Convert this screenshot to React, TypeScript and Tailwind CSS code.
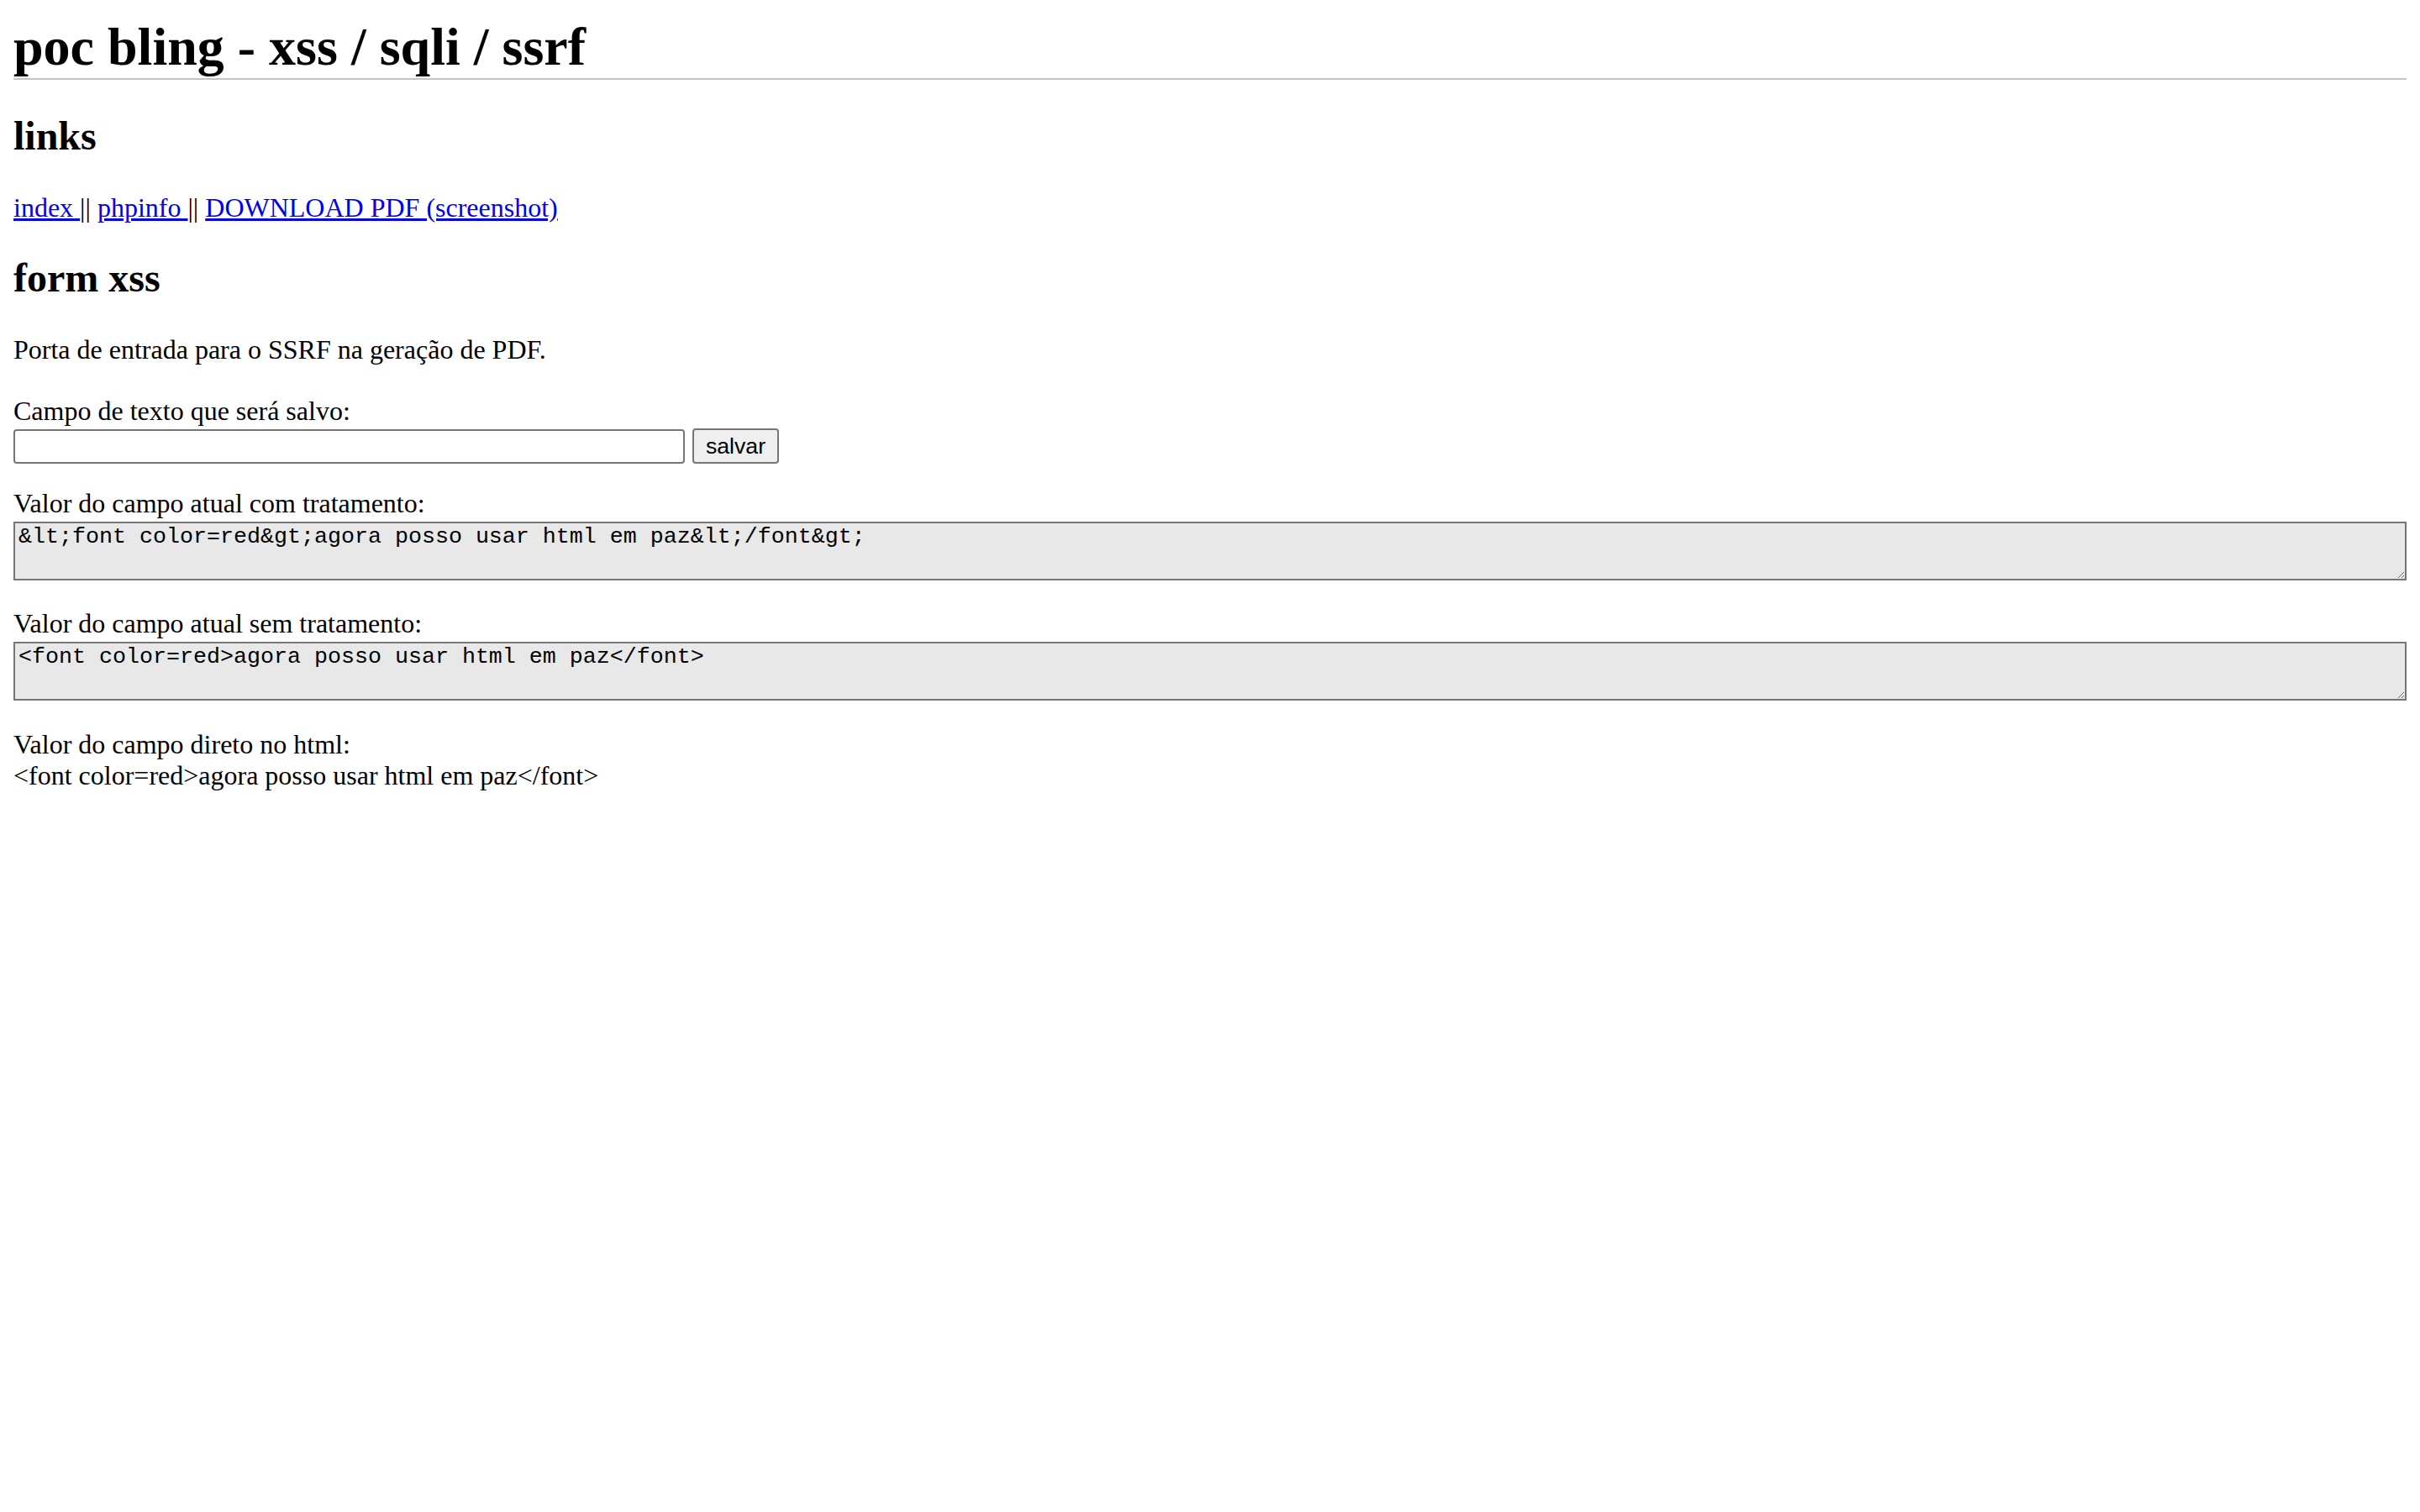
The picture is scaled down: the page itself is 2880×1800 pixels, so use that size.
export default function App() {
  const escaped = "&lt;font color=red&gt;agora posso usar html em paz&lt;/font&gt;";
  const raw = "<font color=red>agora posso usar html em paz</font>";
  return (
    <div className="min-h-screen bg-white px-[16px] pt-[19px] text-black font-['Liberation_Serif',serif] text-[32px] leading-[normal]">
      <h1 className="border-b-2 border-[#c4c4c4] text-[64px] font-bold leading-[normal]">
        poc bling - xss / sqli / ssrf
      </h1>

      <h2 className="mt-[39px] text-[48px] font-bold leading-[normal]">links</h2>
      <p className="mt-[40px]">
        <a href="#" className="text-[#0000ee] underline">index </a>||{" "}
        <a href="#" className="text-[#0000ee] underline">phpinfo </a>||{" "}
        <a href="#" className="text-[#0000ee] underline">DOWNLOAD PDF (screenshot)</a>
      </p>

      <h2 className="mt-[37px] text-[48px] font-bold leading-[normal]">form xss</h2>
      <p className="mt-[40px]">Porta de entrada para o SSRF na geração de PDF.</p>

      <form className="mt-[36px]" onSubmit={(e) => e.preventDefault()}>
        <label className="block">Campo de texto que será salvo:</label>
        <div className="mt-[2px] flex items-center gap-[9px]">
          <input
            type="text"
            className="h-[41px] w-[799px] rounded-[4px] border-2 border-[#767676] bg-white px-[4px] font-['Liberation_Sans',sans-serif] text-[26.67px] outline-none"
          />
          <button
            type="submit"
            className="flex h-[42px] w-[103px] items-center justify-center rounded-[4px] border-2 border-[#767676] bg-[#efefef] font-['Liberation_Sans',sans-serif] text-[26.67px] leading-[normal] text-black"
          >
            salvar
          </button>
        </div>
      </form>

      <div className="mt-[29px]">
        <div>Valor do campo atual com tratamento:</div>
        <textarea
          readOnly
          value={escaped}
          className="mt-[3px] block h-[70px] w-full resize border-2 border-[#767676] bg-[#e8e8e8] px-[4px] pt-[1px] pb-[4px] font-['Liberation_Mono',monospace] text-[26.67px] leading-[normal] text-black outline-none"
        />
      </div>

      <div className="mt-[33px]">
        <div>Valor do campo atual sem tratamento:</div>
        <textarea
          readOnly
          value={raw}
          className="mt-[3px] block h-[70px] w-full resize border-2 border-[#767676] bg-[#e8e8e8] px-[4px] pt-[1px] pb-[4px] font-['Liberation_Mono',monospace] text-[26.67px] leading-[normal] text-black outline-none"
        />
      </div>

      <div className="mt-[34px]">
        <div>Valor do campo direto no html:</div>
        <div>{raw}</div>
      </div>
    </div>
  );
}
